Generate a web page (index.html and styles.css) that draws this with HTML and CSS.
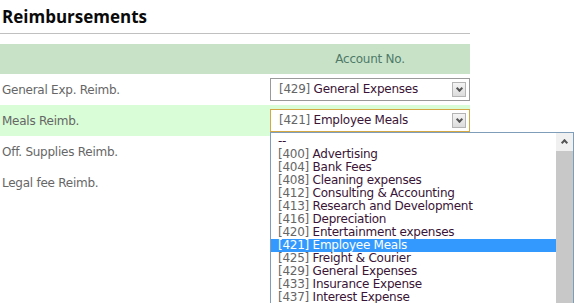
FILE: index.html
```html
<!DOCTYPE html>
<html lang="en">
<head>
    <meta charset="UTF-8">
    <title>Reimbursements</title>
    <link rel="stylesheet" href="styles.css">
</head>
<body>
    <div class="panel">
        <h2 class="title">Reimbursements</h2>

        <div class="grid">
            <div class="row head">
                <div class="label"></div>
                <div class="col">Account No.</div>
            </div>

            <div class="row">
                <div class="label">General Exp. Reimb.</div>
                <div class="col">
                    <div class="select">
                        <span class="code">[429]</span> General Expenses
                        <span class="arrow"></span>
                    </div>
                </div>
            </div>

            <div class="row active">
                <div class="label">Meals Reimb.</div>
                <div class="col">
                    <div class="select focus">
                        <span class="code">[421]</span> Employee Meals
                        <span class="arrow"></span>
                    </div>
                    <div class="dropdown">
                        <ul class="options">
                            <li>--</li>
                            <li><span class="code">[400]</span> Advertising</li>
                            <li><span class="code">[404]</span> Bank Fees</li>
                            <li><span class="code">[408]</span> Cleaning expenses</li>
                            <li><span class="code">[412]</span> Consulting &amp; Accounting</li>
                            <li><span class="code">[413]</span> Research and Development</li>
                            <li><span class="code">[416]</span> Depreciation</li>
                            <li><span class="code">[420]</span> Entertainment expenses</li>
                            <li class="selected"><span class="code">[421]</span> Employee Meals</li>
                            <li><span class="code">[425]</span> Freight &amp; Courier</li>
                            <li><span class="code">[429]</span> General Expenses</li>
                            <li><span class="code">[433]</span> Insurance Expense</li>
                            <li><span class="code">[437]</span> Interest Expense</li>
                        </ul>
                        <div class="scrollbar">
                            <span class="up"></span>
                            <span class="thumb"></span>
                        </div>
                    </div>
                </div>
            </div>

            <div class="row">
                <div class="label">Off. Supplies Reimb.</div>
                <div class="col"></div>
            </div>

            <div class="row">
                <div class="label">Legal fee Reimb.</div>
                <div class="col"></div>
            </div>
        </div>
    </div>
</body>
</html>
```

FILE: styles.css
```css
* {
    margin: 0;
    padding: 0;
    box-sizing: border-box;
}

body {
    font-family: Tahoma, "DejaVu Sans", Verdana, sans-serif;
    font-size: 12px;
    letter-spacing: -0.25px;
    color: #666;
    background: white;
    min-height: 100vh;
}

.panel {
    width: 470px;
}

.title {
    font-family: "Open Sans", "Segoe UI", sans-serif;
    font-size: 17px;
    font-weight: bold;
    letter-spacing: 0;
    color: #0a0a0a;
    padding: 5px 0 0 2px;
    height: 34px;
    border-bottom: 1px solid #c0c0c0;
}

.grid {
    margin-top: 10px;
}

.row {
    display: grid;
    grid-template-columns: 270px 200px;
    height: 31px;
    align-items: center;
}

.row.head {
    background: #c8e2c8;
    height: 30px;
    color: #4f7a68;
}

.row.head .col {
    text-align: center;
}

.row.active {
    background: #d9fdd6;
}

.label {
    padding-left: 2px;
    padding-top: 1px;
}

.col {
    position: relative;
}

.select {
    position: relative;
    height: 23px;
    border: 1px solid #9a9a9a;
    background: white;
    color: #3a1436;
    line-height: 21px;
    padding-left: 8px;
}

.select.focus {
    border-color: #d6a844;
}

.code {
    color: #666;
}

.arrow {
    position: absolute;
    right: 3px;
    top: 3px;
    width: 14px;
    height: 15px;
    border: 1px solid #b4b4b4;
    background: linear-gradient(#f4f4f4, #dcdcdc);
}

.arrow::after {
    content: '';
    position: absolute;
    left: 4px;
    top: 3px;
    width: 3px;
    height: 3px;
    border-right: 2px solid #555;
    border-bottom: 2px solid #555;
    transform: rotate(45deg);
}

.dropdown {
    position: absolute;
    left: 0;
    top: 100%;
    width: 304px;
    height: 172px;
    display: flex;
    border: 1px solid #7f9db9;
    border-bottom: none;
    background: white;
    z-index: 2;
}

.options {
    flex: 1;
    list-style: none;
    padding-top: 2px;
    color: #3a1436;
    line-height: 13px;
}

.options li {
    padding-left: 7px;
    white-space: nowrap;
}

.options li.selected {
    background: #3399ff;
    color: white;
}

.options li.selected .code {
    color: white;
}

.scrollbar {
    width: 17px;
    display: flex;
    flex-direction: column;
    background: #f0f0f0;
}

.up {
    position: relative;
    height: 18px;
    background: #f0f0f0;
}

.up::after {
    content: '';
    position: absolute;
    left: 6px;
    top: 7px;
    width: 3px;
    height: 3px;
    border-left: 2px solid #555;
    border-top: 2px solid #555;
    transform: rotate(45deg);
}

.thumb {
    flex: 1;
    background: #c8c8c8;
}
```
